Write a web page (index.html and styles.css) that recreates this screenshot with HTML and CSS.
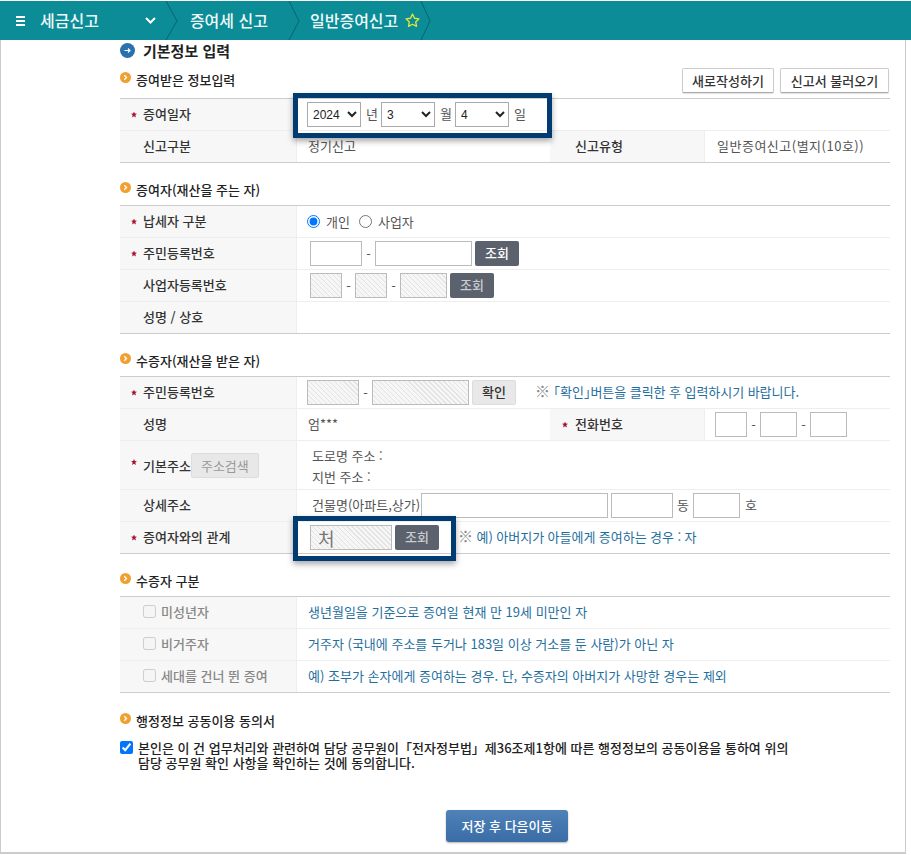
FILE: index.html
```html
<!DOCTYPE html>
<html lang="ko">
<head>
<meta charset="utf-8">
<title>일반증여신고</title>
<link rel="stylesheet" href="styles.css">
</head>
<body>
<header class="topbar">
  <svg class="burger" viewBox="0 0 11 10" width="11" height="10"><path d="M1 1h9M1 5h9M1 9h9" stroke="#fff" stroke-width="1.800" fill="none"/></svg>
  <span class="crumb crumb-first">세금신고</span>
  <svg class="caret" viewBox="0 0 11 7" width="11" height="7"><path d="M1 1l4.500 4.500L10 1" stroke="#fff" stroke-width="2" fill="none"/></svg>
  <svg class="sep sep-first" viewBox="0 0 13 39" width="13" height="39"><path d="M1 0l11 20L1 39" stroke="#08646f" stroke-width="1" fill="none"/></svg>
  <span class="crumb crumb-second">증여세 신고</span>
  <svg class="sep sep-second" viewBox="0 0 13 39" width="13" height="39"><path d="M1 0l10 20L1 39" stroke="#08646f" stroke-width="1" fill="none"/></svg>
  <span class="crumb crumb-third">일반증여신고</span>
  <svg class="star" viewBox="0 0 16 16" width="15" height="15"><path d="M8 1.200l2.100 4.400 4.800.6-3.500 3.300.9 4.800L8 12l-4.300 2.300.9-4.800L1.100 6.200l4.800-.6z" stroke="#dfe63c" stroke-width="1.400" fill="none" stroke-linejoin="round"/></svg>
  <svg class="sep sep-third" viewBox="0 0 13 39" width="13" height="39"><path d="M1 0l9 20L1 39" stroke="#08646f" stroke-width="1" fill="none"/></svg>
</header>

<main class="page">
  <div class="content">
    <h1 class="title">
      <svg viewBox="0 0 15 15" width="15" height="15"><circle cx="7.500" cy="7.500" r="7.500" fill="#2a71ad"/><path d="M4.500 7.500h5.500M8 5.500l2 2-2 2" stroke="#fff" stroke-width="1.100" fill="none"/></svg>
      기본정보 입력
    </h1>

    <div class="sub sub-actions">
      <h2 class="sub-title">
        <svg class="dot" viewBox="0 0 11 11" width="11" height="11"><circle cx="5.500" cy="5.500" r="5.500" fill="#f0a030"/><path d="M4.300 3.300l2.200 2.200-2.200 2.200" stroke="#fff" stroke-width="1.300" fill="none"/></svg>
        증여받은 정보입력
      </h2>
      <div class="actions">
        <button class="btn-white btn-new">새로작성하기</button>
        <button class="btn-white btn-load">신고서 불러오기</button>
      </div>
    </div>
    <section class="table">
      <div class="row">
        <div class="th req">증여일자</div>
        <div class="td td-wide date-cell">
          <select class="sel sel-year"><option>2024</option></select><span class="unit">년</span>
          <select class="sel sel-month"><option>3</option></select><span class="unit">월</span>
          <select class="sel sel-day"><option>4</option></select><span class="unit">일</span>
          <div class="mark mark-date"></div>
        </div>
      </div>
      <div class="row">
        <div class="th">신고구분</div>
        <div class="td plain shift-up">정기신고</div>
        <div class="th th-inner">신고유형</div>
        <div class="td plain type-cell">일반증여신고(별지(10호))</div>
      </div>
    </section>

    <h2 class="sub-title sub">
      <svg class="dot" viewBox="0 0 11 11" width="11" height="11"><circle cx="5.500" cy="5.500" r="5.500" fill="#f0a030"/><path d="M4.300 3.300l2.200 2.200-2.200 2.200" stroke="#fff" stroke-width="1.300" fill="none"/></svg>
      증여자(재산을 주는 자)
    </h2>
    <section class="table">
      <div class="row">
        <div class="th req">납세자 구분</div>
        <div class="td td-wide radios">
          <label class="opt"><input type="radio" name="kind" checked>개인</label>
          <label class="opt"><input type="radio" name="kind">사업자</label>
        </div>
      </div>
      <div class="row">
        <div class="th req">주민등록번호</div>
        <div class="td td-wide fields pad-14">
          <input class="in w52"><span class="dash">-</span><input class="in w97"><button class="btn-dark">조회</button>
        </div>
      </div>
      <div class="row">
        <div class="th">사업자등록번호</div>
        <div class="td td-wide fields pad-14">
          <input class="in off w32" disabled><span class="dash">-</span><input class="in off w32" disabled><span class="dash">-</span><input class="in off w47" disabled><button class="btn-dark dim">조회</button>
        </div>
      </div>
      <div class="row">
        <div class="th">성명 / 상호</div>
        <div class="td td-wide"></div>
      </div>
    </section>

    <h2 class="sub-title sub">
      <svg class="dot" viewBox="0 0 11 11" width="11" height="11"><circle cx="5.500" cy="5.500" r="5.500" fill="#f0a030"/><path d="M4.300 3.300l2.200 2.200-2.200 2.200" stroke="#fff" stroke-width="1.300" fill="none"/></svg>
      수증자(재산을 받은 자)
    </h2>
    <section class="table">
      <div class="row">
        <div class="th req">주민등록번호</div>
        <div class="td td-wide fields pad-11">
          <input class="in off w52" disabled><span class="dash">-</span><input class="in off w97" disabled><button class="btn-light">확인</button>
          <span class="note note-check"><i>※</i> 「확인」버튼을 클릭한 후 입력하시기 바랍니다.</span>
        </div>
      </div>
      <div class="row">
        <div class="th">성명</div>
        <div class="td plain">엄***</div>
        <div class="th th-inner req">전화번호</div>
        <div class="td fields phone">
          <input class="in w32"><span class="dash">-</span><input class="in w37"><span class="dash">-</span><input class="in w37">
        </div>
      </div>
      <div class="row row-tall">
        <div class="th req addr-th">기본주소<button class="btn-addr" disabled>주소검색</button></div>
        <div class="td td-wide addr-lines">
          <span>도로명 주소 :</span>
          <span>지번 주소 :</span>
        </div>
      </div>
      <div class="row">
        <div class="th">상세주소</div>
        <div class="td td-wide fields pad-15">
          <span class="bldg">건물명(아파트,상가)</span><input class="in w187"><input class="in w62 gap-3"><span class="unit-dong">동</span><input class="in w47"><span class="unit-ho">호</span>
        </div>
      </div>
      <div class="row">
        <div class="th req">증여자와의 관계</div>
        <div class="td td-wide fields pad-14">
          <input class="in off w82 big" value="처" disabled><button class="btn-dark dim">조회</button>
          <span class="note note-rel"><i>※</i> 예) 아버지가 아들에게 증여하는 경우 : 자</span>
          <div class="mark mark-rel"></div>
        </div>
      </div>
    </section>

    <h2 class="sub-title sub">
      <svg class="dot" viewBox="0 0 11 11" width="11" height="11"><circle cx="5.500" cy="5.500" r="5.500" fill="#f0a030"/><path d="M4.300 3.300l2.200 2.200-2.200 2.200" stroke="#fff" stroke-width="1.300" fill="none"/></svg>
      수증자 구분
    </h2>
    <section class="table">
      <div class="row">
        <label class="th check"><input type="checkbox" disabled>미성년자</label>
        <div class="td td-wide note">생년월일을 기준으로 증여일 현재 만 19세 미만인 자</div>
      </div>
      <div class="row">
        <label class="th check"><input type="checkbox" disabled>비거주자</label>
        <div class="td td-wide note">거주자 (국내에 주소를 두거나 183일 이상 거소를 둔 사람)가 아닌 자</div>
      </div>
      <div class="row">
        <label class="th check"><input type="checkbox" disabled>세대를 건너 뛴 증여</label>
        <div class="td td-wide note">예) 조부가 손자에게 증여하는 경우. 단, 수증자의 아버지가 사망한 경우는 제외</div>
      </div>
    </section>

    <h2 class="sub-title sub sub-agree">
      <svg class="dot" viewBox="0 0 11 11" width="11" height="11"><circle cx="5.500" cy="5.500" r="5.500" fill="#f0a030"/><path d="M4.300 3.300l2.200 2.200-2.200 2.200" stroke="#fff" stroke-width="1.300" fill="none"/></svg>
      행정정보 공동이용 동의서
    </h2>
    <label class="agree">
      <input type="checkbox" checked>
      <span>본인은 이 건 업무처리와 관련하여 담당 공무원이「전자정부법」제36조제1항에 따른 행정정보의 공동이용을 통하여 위의<br>담당 공무원 확인 사항을 확인하는 것에 동의합니다.</span>
    </label>

    <div class="submit"><button class="btn-save">저장 후 다음이동</button></div>
  </div>
</main>
</body>
</html>
```

FILE: styles.css
```css
* { box-sizing: border-box; }
html, body { margin: 0; padding: 0; background: #fff; overflow: hidden; }
body { font-family: "Noto Sans CJK KR", "Noto Sans", sans-serif; font-size: 13px; color: #333; padding-top: 1px; }
button, input, select { font-family: inherit; margin: 0; }

.topbar { display: flex; align-items: center; height: 39px; background: #0b8c96; color: #fff; padding-left: 15px; width: 911px; }
.burger { flex: none; }
.crumb { font-size: 16px; font-weight: 500; color: #eefafa; white-space: nowrap; padding-bottom: 2px; }
.crumb-first { margin-left: 14px; }
.caret { flex: none; margin-left: 46px; }
.sep { flex: none; }
.sep-first { margin-left: 9px; }
.crumb-second { margin-left: 12px; }
.sep-second { margin-left: 20px; }
.crumb-third { margin-left: 9px; }
.star { flex: none; margin-left: 7px; }
.sep-third { margin-left: 0; }

.page { width: 906px; height: 814px; border-left: 1px solid #ccc; border-right: 1px solid #ccc; border-bottom: 2px solid #ccc; }
.content { width: 770px; margin-left: 119px; }

.title { display: flex; align-items: center; gap: 8px; height: 22px; margin: 0; padding-bottom: 2px; font-size: 15px; font-weight: 700; color: #222; }
.sub-title { display: flex; align-items: center; gap: 5px; margin: 0; padding-bottom: 1px; font-size: 13px; font-weight: 500; color: #222; }
.dot { flex: none; margin-top: -5px; }
.sub { height: 30px; margin-top: 12px; }
.sub-actions { display: flex; justify-content: space-between; align-items: center; height: 36px; margin-top: 0; }
.sub-actions .sub-title { margin-top: 0; }
.sub-agree { margin-top: 13px; }
.actions { display: flex; gap: 6px; margin: 1px 1px 0 0; }
.btn-white { height: 25px; background: #fff; border: 1px solid #ccc; border-bottom-color: #aaa; border-radius: 2px; font-size: 13px; font-weight: 500; color: #333; padding: 0; box-shadow: 0 1px 1px rgba(0,0,0,.12); }
.btn-new { width: 92px; }
.btn-load { width: 109px; }

.table { border-top: 1px solid #ccc; }
.row { display: grid; grid-template-columns: 176px 254px 154px 186px; height: 32px; border-bottom: 1px solid #eee; }
.table .row:last-child { border-bottom-color: #ccc; }
.row-tall { height: 49px; }
.th { display: flex; align-items: center; position: relative; padding: 0 0 2px 23px; background: #f7f7f7; font-weight: 500; color: #333; }
.th-inner { padding-left: 25px; }
.req::before { content: ""; position: absolute; left: 11px; top: 50%; margin-top: -3px; width: 6px; height: 6px; background: #a8122a; clip-path: polygon(50% 0, 64% 35%, 100% 38%, 72% 60%, 82% 100%, 50% 78%, 18% 100%, 28% 60%, 0 38%, 36% 35%); }
.th-inner.req::before { left: 12px; }
.addr-th::before { margin-top: -6px; }
.td { display: flex; align-items: center; position: relative; border-left: 1px solid #eee; background: #fff; }
.td-wide { grid-column: span 3; }
.plain { padding: 0 0 2px 11px; color: #555; }
.shift-up { padding-bottom: 3px; }
.type-cell { padding-left: 12px; letter-spacing: .5px; }

.date-cell { padding-left: 10px; }
.sel { height: 25px; font-size: 12px; font-family: "Liberation Sans", sans-serif; color: #222; background: #fff; border: 1px solid #aaa; border-radius: 0; padding-left: 1px; }
.sel-year { width: 54px; }
.sel-month { width: 54px; margin-left: 3px; }
.sel-day { width: 54px; margin-left: 3px; }
.unit { margin-left: 5px; padding-bottom: 2px; color: #555; }
.mark { position: absolute; z-index: 2; border: 5px solid #003c71; box-shadow: 0 3px 6px rgba(0,0,0,.35); pointer-events: none; }
.mark-date { left: -4px; top: -6px; width: 259px; height: 45px; }
.mark-rel { left: -4px; top: -6px; width: 163px; height: 45px; }

.radios { padding-left: 10px; gap: 9px; }
.opt { display: flex; align-items: center; color: #555; line-height: 15px; padding-bottom: 1px; }
.opt input { width: 13px; height: 13px; margin: 1px 6px 0 0; accent-color: #0075ff; }

.fields { gap: 0; }
.pad-14 { padding-left: 13px; }
.pad-11 { padding-left: 10px; }
.pad-15 { padding-left: 15px; }
.in { height: 25px; border: 1px solid #bbb; background: #fff; padding: 0 2px; border-radius: 0; flex: none; }
.off { background: repeating-linear-gradient(45deg, #f6f6f6 0, #f6f6f6 2.500px, #e3e3e3 2.500px, #e3e3e3 3.500px); }
.w32 { width: 32px; }
.w37 { width: 37px; }
.w47 { width: 47px; }
.w52 { width: 52px; }
.w62 { width: 62px; }
.w82 { width: 82px; }
.w97 { width: 97px; }
.w187 { width: 187px; }
.gap-3 { margin-left: 3px; }
.big { font-size: 18px; color: #777; padding-left: 7px; }
.dash { width: 13px; text-align: center; color: #555; flex: none; }
.phone { padding-left: 10px; }
.btn-dark { flex: none; width: 44px; height: 25px; margin-left: 3px; border: 0; border-radius: 2px; background: #5b616d; color: #fff; font-size: 13px; font-weight: 500; padding: 0 0 2px; }
.dim { color: #c9ccd0; }
.btn-light { flex: none; width: 44px; height: 25px; margin-left: 3px; border: 1px solid #ddd; border-radius: 2px; background: #e8e8e8; color: #333; font-size: 13px; font-weight: 500; padding: 0 0 2px; }
.note { color: #1f6f9e; white-space: nowrap; padding: 0 0 2px 11px; }
.note i { font-style: normal; color: #888; font-size: 15px; line-height: 15px; }
.note-check { margin-left: 19px; padding-left: 0; font-feature-settings: "halt"; word-spacing: -.2px; }
.note-rel { margin-left: 19px; padding-left: 0; word-spacing: -.2px; }
.addr-th { padding-bottom: 0; }
.btn-addr { width: 68px; height: 25px; margin-left: 0; border: 1px solid #ddd; border-radius: 2px; background: #e8e8e8; color: #999; font-size: 13px; padding: 0; }
.addr-lines { flex-direction: column; align-items: flex-start; justify-content: center; gap: 6px; padding: 2px 0 0 15px; color: #555; line-height: 15px; }
.bldg { margin-right: 1px; padding-bottom: 2px; color: #555; white-space: nowrap; }
.unit-dong { margin: 0 4px; padding-bottom: 2px; color: #555; }
.unit-ho { margin-left: 5px; padding-bottom: 2px; color: #555; }

.check { padding-left: 23px; color: #888; gap: 5px; }
.check input { width: 13px; height: 13px; margin: 0; }

.agree { display: flex; align-items: flex-start; gap: 5px; margin-top: 4px; font-weight: 500; color: #222; line-height: 15px; }
.agree input { flex: none; width: 13px; height: 13px; margin: 1px 0 0; accent-color: #0075ff; }
.submit { display: flex; justify-content: center; margin-top: 40px; padding-left: 4px; }
.btn-save { width: 122px; height: 32px; border: 0; border-radius: 3px; background: linear-gradient(#4f82b8, #3a6ca6); color: #fff; font-size: 13px; font-weight: 500; padding: 0 0 2px; box-shadow: 0 1px 2px rgba(0,0,0,.3); }
```
